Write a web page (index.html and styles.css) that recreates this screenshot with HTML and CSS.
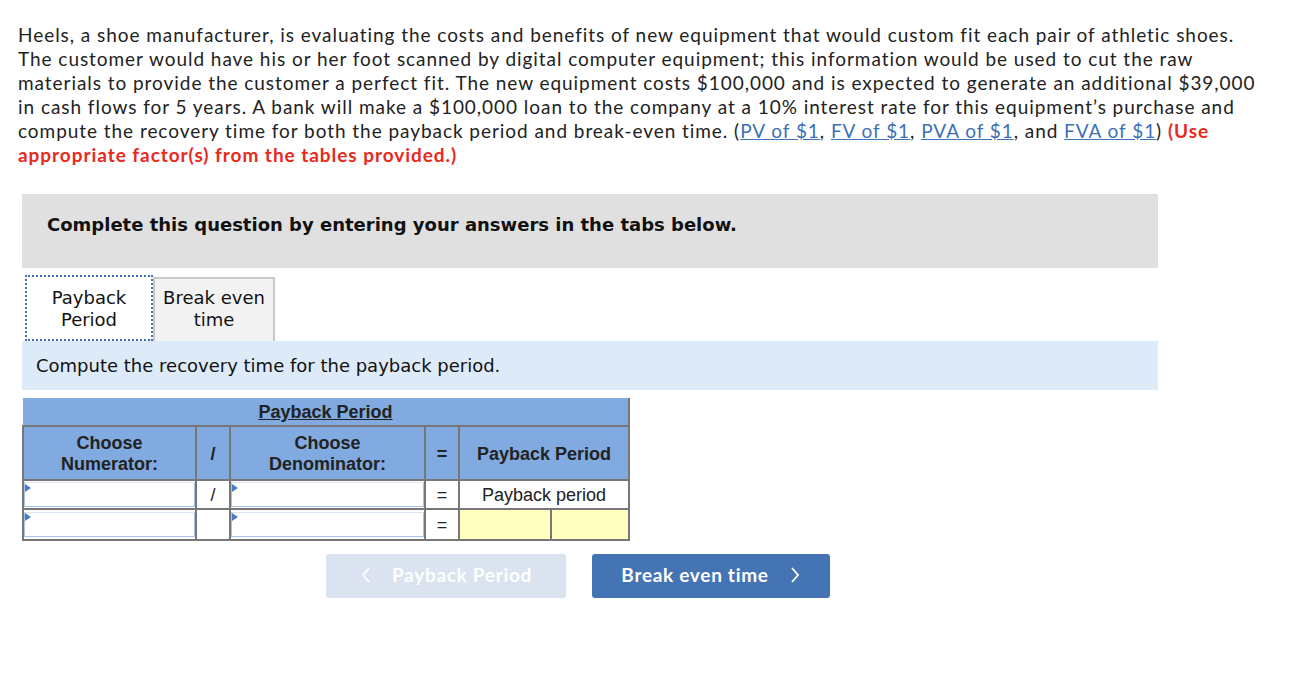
FILE: index.html
```html
<!DOCTYPE html>
<html lang="en">
<head>
    <meta charset="UTF-8">
    <title>Payback Period</title>
    <link rel="stylesheet" href="styles.css">
</head>
<body>

<p class="question">
    Heels, a shoe manufacturer, is evaluating the costs and benefits of new equipment that would custom fit each pair of athletic shoes.<br>
    The customer would have his or her foot scanned by digital computer equipment; this information would be used to cut the raw<br>
    materials to provide the customer a perfect fit. The new equipment costs $100,000 and is expected to generate an additional $39,000<br>
    in cash flows for 5 years. A bank will make a $100,000 loan to the company at a 10% interest rate for this equipment’s purchase and<br>
    compute the recovery time for both the payback period and break-even time. (<a href="#">PV of $1</a>, <a href="#">FV of $1</a>, <a href="#">PVA of $1</a>, and <a href="#">FVA of $1</a>) <span class="note">(Use<br>
    appropriate factor(s) from the tables provided.)</span>
</p>

<div class="panel">
    <div class="instructions">Complete this question by entering your answers in the tabs below.</div>

    <div class="tabs">
        <div class="tab active">Payback<br>Period</div>
        <div class="tab">Break even<br>time</div>
    </div>

    <div class="prompt">Compute the recovery time for the payback period.</div>

    <table class="calc">
        <tr class="title-row">
            <th colspan="6"><u>Payback Period</u></th>
        </tr>
        <tr class="head-row">
            <th class="c-num">Choose<br>Numerator:</th>
            <th class="c-op">/</th>
            <th class="c-den">Choose<br>Denominator:</th>
            <th class="c-op">=</th>
            <th colspan="2">Payback Period</th>
        </tr>
        <tr class="row">
            <td class="entry"><input type="text"></td>
            <td class="c-op">/</td>
            <td class="entry"><input type="text"></td>
            <td class="c-op">=</td>
            <td colspan="2" class="label">Payback period</td>
        </tr>
        <tr class="row last">
            <td class="entry"><input type="text"></td>
            <td class="c-op"></td>
            <td class="entry"><input type="text"></td>
            <td class="c-op">=</td>
            <td class="answer"></td>
            <td class="answer unit"></td>
        </tr>
    </table>

    <div class="nav">
        <button class="nav-btn prev">
            <svg width="12" height="18" viewBox="0 0 12 18"><polyline points="9,2 3,9 9,16" fill="none" stroke="#fff" stroke-width="1.8"/></svg>
            Payback Period
        </button>
        <button class="nav-btn next">
            Break even time
            <svg width="12" height="18" viewBox="0 0 12 18"><polyline points="3,2 9,9 3,16" fill="none" stroke="#fff" stroke-width="1.8"/></svg>
        </button>
    </div>
</div>

</body>
</html>
```

FILE: styles.css
```css
body {
    margin: 0;
    padding: 0 18px;
    background: #fff;
    color: #222;
    font-family: Lato, "Open Sans", sans-serif;
}

.question {
    margin: 23px 0 0;
    font-size: 19px;
    line-height: 24px;
    letter-spacing: 0.95px;
    white-space: nowrap;
}

.question a {
    color: #3b70b7;
    text-decoration: underline;
}

.note {
    color: #e8291c;
    font-weight: bold;
}

.panel {
    margin: 27px 0 0 4px;
    width: 1136px;
    font-family: "DejaVu Sans", Verdana, sans-serif;
    color: #111;
}

.instructions {
    box-sizing: border-box;
    background: #e0e0e0;
    height: 74px;
    padding: 20px 0 0 25px;
    font-size: 18px;
    line-height: 22px;
    font-weight: bold;
}

.tabs {
    display: flex;
    align-items: flex-end;
    margin: 7px 0 0 3px;
    height: 66px;
}

.tab {
    box-sizing: border-box;
    height: 64px;
    width: 122px;
    border: 2px solid #c8c8c8;
    border-bottom: none;
    background: #f2f2f2;
    font-size: 18px;
    line-height: 22px;
    text-align: center;
    padding-top: 8px;
}

.tab.active {
    height: 66px;
    width: 128px;
    background: #fff;
    border: 2px dotted #3d6fba;
    padding-top: 10px;
}

.prompt {
    background: #ddebf8;
    height: 49px;
    display: flex;
    align-items: center;
    padding-left: 14px;
    font-size: 18px;
}

.calc {
    margin-top: 8px;
    border-collapse: collapse;
    font-family: "Liberation Sans", Arial, sans-serif;
    font-size: 18px;
    color: #222;
}

.calc th,
.calc td {
    border: 2px solid #777;
    padding: 2px 0 0;
    text-align: center;
}

.calc th {
    background: #80aae0;
    font-weight: bold;
}

.title-row th {
    height: 25px;
    border-top: none;
    border-left: none;
}

.head-row th {
    height: 50px;
    line-height: 21px;
}

.row td {
    height: 25px;
    background: #fff;
}

.row.last td {
    height: 27px;
}

.row td.entry {
    padding: 0;
    height: 27px;
}

.row.last td.entry {
    height: 29px;
}

.c-num { width: 171px; }
.c-den { width: 193px; }
.c-op { width: 32px; }

.entry {
    position: relative;
}

.entry input {
    display: block;
    box-sizing: border-box;
    width: 100%;
    height: 25px;
    margin: 0;
    border: 1px solid #a7c3ea;
    border-top-color: #dbe6f5;
    outline: none;
    background: #fff;
}

.entry::before {
    content: "";
    position: absolute;
    top: 3px;
    left: 1px;
    border-left: 6px solid #4a7cc4;
    border-top: 4px solid transparent;
    border-bottom: 4px solid transparent;
}

.answer {
    background: #ffffc0 !important;
    width: 90px;
}

.answer.unit {
    width: 76px;
}

.nav {
    display: flex;
    gap: 26px;
    margin: 13px 0 0 304px;
}

.nav-btn {
    height: 44px;
    width: 240px;
    padding: 0 0 3px;
    border: none;
    border-radius: 3px;
    color: #fff;
    font-family: Lato, "Open Sans", sans-serif;
    font-size: 19px;
    letter-spacing: 0.7px;
    font-weight: bold;
    display: flex;
    align-items: center;
    justify-content: center;
    gap: 20px;
}

.nav-btn.prev {
    background: #dae3ef;
}

.nav-btn.next {
    width: 238px;
    background: #4574b4;
}
```
